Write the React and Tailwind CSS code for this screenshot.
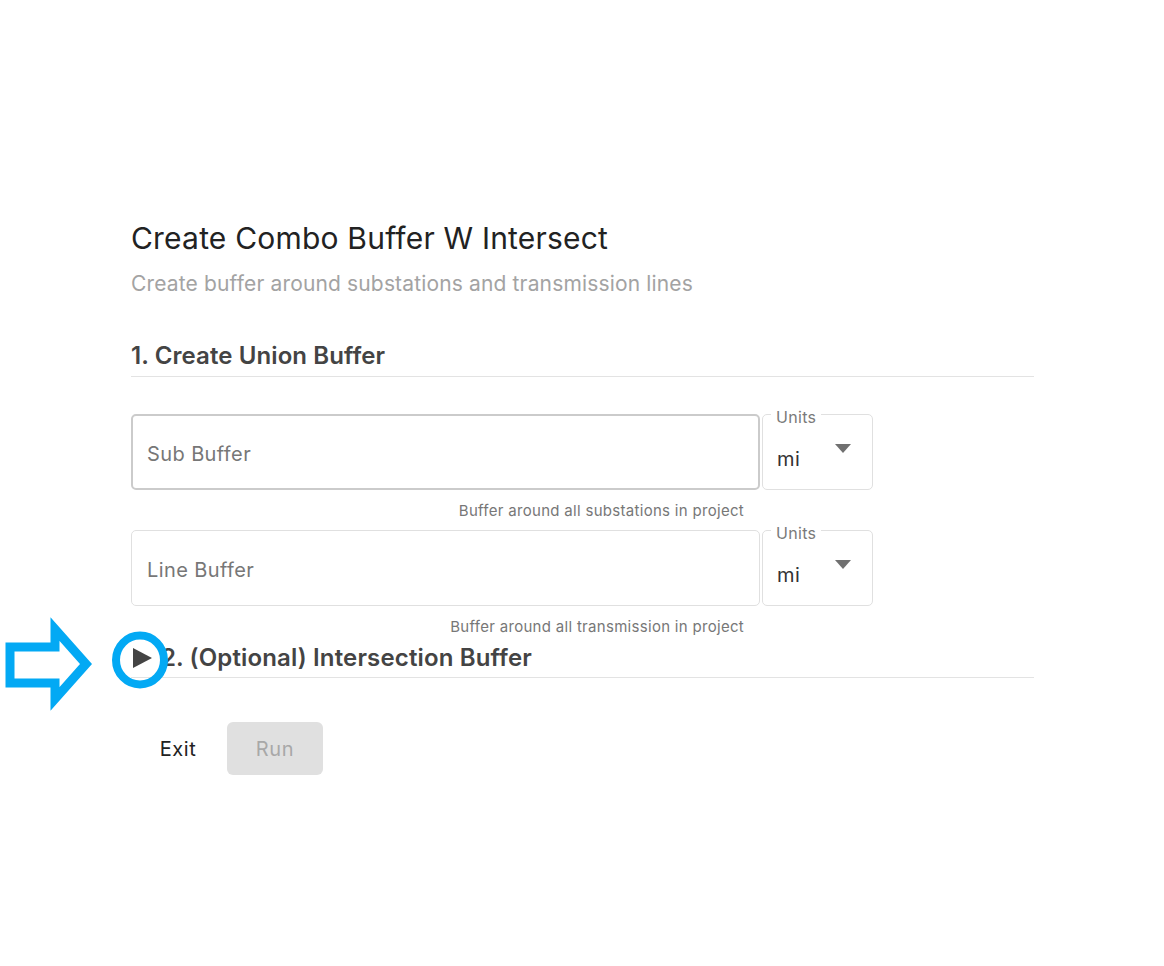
import React, { useState } from 'react';

const UnitsSelect = ({ value }) => (
  <div className="relative w-[111px] h-[76px] border border-[#e0e0e0] rounded-[5px] flex items-center pl-[14px] pr-[21px] bg-white">
    <span className="absolute left-[8px] top-[-7px] px-[5px] bg-white text-[16px] leading-[18px] tracking-[0.3px] text-[#7a7a7a]">
      Units
    </span>
    <span className="text-[20px] tracking-[0.4px] text-[#333] mt-[14px]">{value}</span>
    <svg className="ml-auto mb-[8px]" width="16" height="9" viewBox="0 0 16 9">
      <path d="M0 0 L16 0 L8 9 Z" fill="#707070" />
    </svg>
  </div>
);

const BufferRow = ({ placeholder, helper, focused }) => (
  <div>
    <div className="flex gap-[2px]">
      <input
        placeholder={placeholder}
        className={`w-[629px] h-[76px] rounded-[5px] bg-white pt-[4px] text-[20px] tracking-[0.4px] text-[#333] placeholder:text-[#777] outline-none ${
          focused ? 'border-2 border-[#cbcbcb] px-[14px]' : 'border border-[#e0e0e0] px-[15px]'
        }`}
      />
      <UnitsSelect value="mi" />
    </div>
    <p className="w-[629px] mt-[11px] mb-[-1px] pr-[16px] text-right text-[15px] leading-[20px] tracking-[0.3px] text-[#777]">{helper}</p>
  </div>
);

export default function App() {
  const [open, setOpen] = useState(false);

  return (
    <div className="relative min-h-[966px] bg-white font-['Inter',sans-serif]">
      <div className="pl-[131px] pt-[220px] w-[1034px]">
        <h1 className="text-[30px] leading-[36px] tracking-[0.2px] text-[#222]">Create Combo Buffer W Intersect</h1>
        <p className="mt-[14px] text-[21px] leading-[28px] tracking-[0.15px] text-[#a3a3a3]">
          Create buffer around substations and transmission lines
        </p>

        <h2 className="mt-[43px] pb-[5px] border-b border-[#e3e3e3] text-[24px] leading-[30px] font-semibold tracking-[0.1px] text-[#444]">
          1. Create Union Buffer
        </h2>

        <div className="mt-[37px] flex flex-col gap-[10px]">
          <BufferRow placeholder="Sub Buffer" helper="Buffer around all substations in project" focused />
          <BufferRow placeholder="Line Buffer" helper="Buffer around all transmission in project" />
        </div>

        <button
          type="button"
          onClick={() => setOpen(!open)}
          className="mt-[7px] w-full pb-[4px] border-b border-[#e3e3e3] flex items-center text-left"
        >
          <svg className="ml-[1px]" width="21" height="22" viewBox="0 0 21 22">
            <path d="M1 1 L20 11 L1 21 Z" fill="#444" />
          </svg>
          <span className="ml-[8px] text-[24px] leading-[30px] font-semibold tracking-[0.15px] text-[#444]">
            2. (Optional) Intersection Buffer
          </span>
        </button>

        <div className="mt-[44px] flex gap-[2px]">
          <button type="button" className="w-[94px] h-[53px] rounded-md text-[20px] tracking-[0.6px] text-[#222]">
            Exit
          </button>
          <button
            type="button"
            disabled
            className="w-[96px] h-[53px] rounded-md bg-[#e0e0e0] text-[20px] tracking-[0.6px] text-[#a8a8a8]"
          >
            Run
          </button>
        </div>
      </div>

      {/* annotation overlay */}
      <svg className="absolute left-0 top-0 pointer-events-none" width="1164" height="966">
        <polygon
          points="10,647 55,647 55,629 86,664 55,699 55,683 10,683"
          fill="none"
          stroke="#03a9f4"
          strokeWidth="9"
          strokeLinejoin="miter"
        />
        <ellipse cx="140" cy="660" rx="24" ry="24.5" fill="none" stroke="#03a9f4" strokeWidth="8" />
      </svg>
    </div>
  );
}
